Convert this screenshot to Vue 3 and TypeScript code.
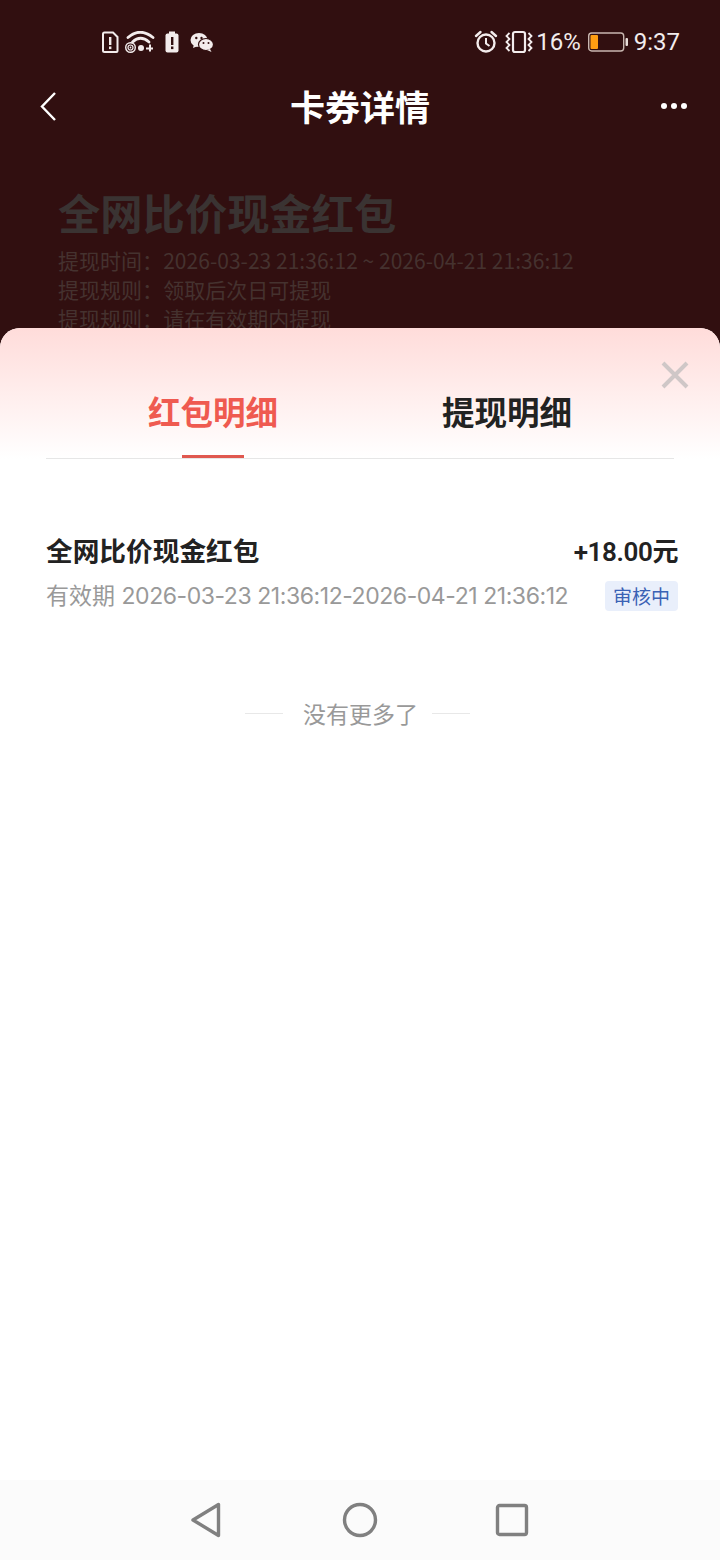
<script setup lang="ts">
const rules: [string, string][] = [
  ['提现时间\uFF1A', '2026-03-23 21:36:12 ~ 2026-04-21 21:36:12'],
  ['提现规则\uFF1A', '领取后次日可提现'],
  ['提现规则\uFF1A', '请在有效期内提现'],
]
</script>

<template>
  <div class="page">
    <div class="status">
      <div class="status-left">
        <svg width="18" height="22" viewBox="0 0 18 22"><path d="M2 3a1.500 1.500 0 0 1 1.500-1.500H12L16.500 6v14a1 1 0 0 1-1 1h-12a1.500 1.500 0 0 1-1.500-1.500z" fill="none" stroke="#f3ecec" stroke-width="2"/><rect x="8" y="6" width="2.400" height="8" fill="#f3ecec"/><rect x="8" y="15.500" width="2.400" height="2.600" fill="#f3ecec"/></svg>
        <svg class="wifi" width="30" height="22" viewBox="0 0 30 22"><g fill="none" stroke="#f3ecec" stroke-linecap="round"><path d="M3 6.500Q15 -4 28 6.500" stroke-width="2.800"/><path d="M7.500 11Q15.500 3.500 24 11" stroke-width="2.800"/><circle cx="5.500" cy="16.500" r="4.800" stroke-width="1.400"/><circle cx="5.500" cy="16.500" r="2.500" stroke-width="1.200"/></g><circle cx="5.500" cy="16.500" r="0.900" fill="#f3ecec"/><circle cx="16" cy="17" r="3" fill="#f3ecec"/><path d="M21 17.500h7M25 13.500v7" stroke="#f3ecec" stroke-width="2"/></svg>
        <svg class="bat-alert" width="14" height="22" viewBox="0 0 14 22"><rect x="4" y="0.500" width="6" height="3" fill="#f3ecec"/><rect x="0.500" y="2.500" width="13" height="19" rx="2" fill="#f3ecec"/><rect x="6" y="6" width="2.400" height="8" fill="#310f10"/><rect x="6" y="15.500" width="2.400" height="2.600" fill="#310f10"/></svg>
        <svg class="wechat" width="24" height="20" viewBox="0 0 24 20"><ellipse cx="9" cy="8" rx="8.500" ry="7" fill="#f3ecec"/><path d="M4 12l-1 4 5-2z" fill="#f3ecec"/><ellipse cx="16" cy="12.500" rx="7.500" ry="6" fill="#f3ecec" stroke="#310f10" stroke-width="1.200"/><path d="M20 17l1.500 3-4.500-2z" fill="#f3ecec"/><circle cx="6.300" cy="6" r="1.200" fill="#310f10"/><circle cx="11.500" cy="6" r="1.200" fill="#310f10"/><circle cx="13.500" cy="11" r="1" fill="#310f10"/><circle cx="18.500" cy="11" r="1" fill="#310f10"/></svg>
      </div>
      <div class="status-right">
        <svg class="alarm" width="24" height="24" viewBox="0 0 24 24"><g fill="none" stroke="#f3ecec" stroke-width="2.400"><circle cx="12" cy="13" r="8.500"/><path d="M12 8v5.500l3.500 2.500" stroke-width="2"/><path d="M2 6l4.500-4M22 6l-4.500-4" stroke-linecap="round"/></g></svg>
        <svg class="vibrate" width="28" height="24" viewBox="0 0 28 24"><rect x="8" y="2" width="12" height="20" rx="2" fill="none" stroke="#f3ecec" stroke-width="2.200"/><path d="M4.500 3l-3 3 3 3-3 3 3 3-3 3 3 3M23.500 3l3 3-3 3 3 3-3 3 3 3-3 3" fill="none" stroke="#f3ecec" stroke-width="1.800"/></svg>
        <span class="pct">16%</span>
        <svg class="battery" width="40" height="20" viewBox="0 0 40 20"><rect x="0.700" y="1" width="35" height="18" rx="3" fill="none" stroke="#c9b7b0" stroke-width="1.400"/><rect x="2.500" y="3" width="7.500" height="14" rx="1" fill="#ff9d12"/><rect x="37.500" y="6" width="2.500" height="8" rx="1" fill="#e8dcd8"/></svg>
        <span class="time">9:37</span>
      </div>
    </div>

    <header class="topbar">
      <svg class="back" width="20" height="32" viewBox="0 0 20 32"><path d="M16 3L3 16.500 16 30" fill="none" stroke="#fff" stroke-width="2.400"/></svg>
      <h1 class="top-title">卡券详情</h1>
      <div class="more"><i></i><i></i><i></i></div>
    </header>

    <section class="info">
      <h2 class="info-title">全网比价现金红包</h2>
      <p v-for="(r, i) in rules" :key="i" class="info-line">{{ r[0] }}{{ r[1] }}</p>
    </section>

    <div class="sheet">
      <div class="sheet-head">
        <svg class="close" width="30" height="30" viewBox="0 0 30 30"><path d="M3 3l24 24M27 3L3 27" stroke="#cfc7c7" stroke-width="4" fill="none"/></svg>
        <div class="tabs">
          <div class="tab tab-active">红包明细</div>
          <div class="tab">提现明细</div>
        </div>
      </div>

      <div class="list">
        <div class="row">
          <div class="row-name">全网比价现金红包</div>
          <div class="row-amount">+18.00元</div>
        </div>
        <div class="row row-sub">
          <div class="row-date">有效期 <span class="digits">2026-03-23 21:36:12-2026-04-21 21:36:12</span></div>
          <div class="badge">审核中</div>
        </div>
      </div>

      <div class="end">
        <span class="end-line"></span>
        <span class="end-text">没有更多了</span>
        <span class="end-line"></span>
      </div>

      <nav class="navbar">
        <svg class="nav-back" width="34" height="38" viewBox="0 0 34 38"><path d="M5 19L30.500 3.500V34.500z" fill="none" stroke="#808080" stroke-width="3.400" stroke-linejoin="round"/></svg>
        <svg width="36" height="36" viewBox="0 0 36 36"><circle cx="18" cy="18" r="15.500" fill="none" stroke="#808080" stroke-width="3.400"/></svg>
        <svg class="nav-recent" width="34" height="34" viewBox="0 0 34 34"><rect x="2.500" y="2.500" width="29" height="29" rx="2" fill="none" stroke="#808080" stroke-width="3.400"/></svg>
      </nav>
    </div>
  </div>
</template>

<style>
html, body { margin: 0; padding: 0; }
</style>

<style scoped>
.page {
  position: relative;
  width: 720px;
  height: 1560px;
  overflow: hidden;
  background: #310f10;
  font-family: "Noto Sans CJK SC", Inter, sans-serif;
}
.status {
  height: 84px;
  box-sizing: border-box;
  padding: 0 40px 0 101px;
  display: flex;
  justify-content: space-between;
  align-items: center;
  color: #f3ecec;
}
.status-left, .status-right { display: flex; align-items: center; }
.wifi { margin-left: 6px; }
.bat-alert { margin-left: 10px; }
.wechat { margin-left: 11px; }
.vibrate { margin-left: 7px; }
.pct {
  margin-left: 3px;
  font: 24px/28px Roboto, sans-serif;
}
.battery { margin-left: 7px; }
.time {
  margin-left: 6px;
  font: 24px/28px Roboto, sans-serif;
}
.topbar {
  height: 44px;
  padding: 0 33px 0 39px;
  display: flex;
  align-items: center;
  justify-content: space-between;
}
.top-title {
  margin: 0;
  font-size: 35px;
  line-height: 44px;
  font-weight: 700;
  color: #fff;
}
.more { display: flex; gap: 4px; }
.more i {
  display: block;
  width: 6px;
  height: 6px;
  border-radius: 50%;
  background: #fff;
}
.info { padding: 54px 0 0 58px; }
.info-title {
  margin: 0 0 4px;
  font-size: 42.300px;
  line-height: 60px;
  font-weight: 700;
  color: #3a3332;
}
.info-line {
  margin: 0;
  font-size: 21px;
  line-height: 29px;
  letter-spacing: 0.030px;
  color: #45322f;
  white-space: nowrap;
}
.sheet {
  position: absolute;
  left: 0;
  top: 328px;
  width: 720px;
  height: 1232px;
  display: flex;
  flex-direction: column;
  border-radius: 20px 20px 0 0;
  background: #fff;
  overflow: hidden;
}
.sheet-head {
  position: relative;
  height: 131px;
  background: linear-gradient(180deg, #ffdcda 0%, #ffffff 100%);
}
.close { position: absolute; right: 30px; top: 32px; }
.tabs {
  position: absolute;
  left: 46px;
  right: 46px;
  top: 60px;
  height: 70px;
  border-bottom: 1px solid #e6e6e6;
  display: flex;
  justify-content: center;
}
.tab {
  position: relative;
  width: 294px;
  text-align: center;
  font-size: 32.500px;
  line-height: 46px;
  font-weight: 700;
  color: #222;
}
.tab-active { color: #ef5a50; }
.tab-active::after {
  content: "";
  position: absolute;
  left: 116px;
  top: 67px;
  width: 62px;
  height: 3px;
  background: #e0584f;
}
.list { padding: 70px 42px 0 46px; }
.row {
  display: flex;
  justify-content: space-between;
  align-items: center;
  height: 40px;
}
.row-name {
  font-size: 26.700px;
  font-weight: 700;
  color: #222;
}
.row-amount {
  font-family: Roboto, "Noto Sans CJK SC", sans-serif;
  font-size: 26px;
  font-weight: 600;
  letter-spacing: -0.400px;
  color: #222;
}
.row-sub { margin-top: 5px; }
.row-date {
  font-family: Inter, "Noto Sans CJK SC", sans-serif;
  font-size: 23px;
  color: #999;
  white-space: nowrap;
}
.digits { letter-spacing: -0.440px; }
.badge {
  width: 73px;
  height: 30px;
  margin-top: 4px;
  border-radius: 4px;
  background: #e9effb;
  color: #3a62b5;
  font-size: 19px;
  line-height: 30px;
  text-align: center;
}
.end {
  margin-top: 82px;
  padding-right: 5px;
  display: flex;
  justify-content: center;
  align-items: center;
  font-size: 23px;
  line-height: 34px;
  color: #999;
}
.end-text { margin: 0 14px 0 20px; }
.end-line {
  width: 38px;
  height: 1px;
  background: #e8e8e8;
}
.navbar {
  margin-top: auto;
  height: 80px;
  box-sizing: border-box;
  padding-right: 3px;
  background: #fbfbfb;
  display: flex;
  justify-content: center;
  align-items: center;
  gap: 118px;
}
.nav-back { margin-right: 2px; }
.nav-recent { margin-left: -1px; }
</style>
